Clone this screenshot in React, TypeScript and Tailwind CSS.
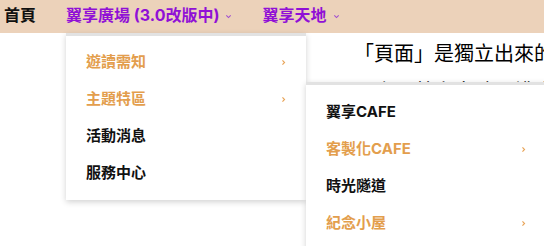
import React from 'react';

const FONT = '[font-family:Inter,"Noto_Sans_CJK_TC",sans-serif]';

function Chevron({ down = false, className = '' }: { down?: boolean; className?: string }) {
  return (
    <svg width="7" height="7" viewBox="0 0 8 8" className={className} fill="none" stroke="currentColor" strokeWidth="1.3">
      {down ? <path d="M1.5 2.8 L4 5.2 L6.5 2.8" /> : <path d="M2.8 1.5 L5.2 4 L2.8 6.5" />}
    </svg>
  );
}

type Item = { label: string; active?: boolean; sub?: boolean };

const mainItems: Item[] = [
  { label: '遊讀需知', active: true, sub: true },
  { label: '主題特區', active: true, sub: true },
  { label: '活動消息' },
  { label: '服務中心' },
];

const subItems: Item[] = [
  { label: '翼享CAFE' },
  { label: '客製化CAFE', active: true, sub: true },
  { label: '時光隧道' },
  { label: '紀念小屋', active: true, sub: true },
];

function MenuList({ items, className = '' }: { items: Item[]; className?: string }) {
  return (
    <ul className={className}>
      {items.map(it => (
        <li key={it.label} className={`flex h-[37px] items-center justify-between pl-[20px] pr-[19px] text-[15px] font-bold ${it.active ? 'text-[#e39e4d]' : 'text-[#111]'}`}>
          <span>{it.label}</span>
          {it.sub && <Chevron className="text-[#e8a458]" />}
        </li>
      ))}
    </ul>
  );
}

export default function App() {
  return (
    <div className={`relative h-[246px] w-[544px] overflow-hidden bg-white ${FONT}`}>
      <nav className="flex h-[33px] items-center bg-[#ecd2ba] pb-[3px] text-[16px] font-bold">
        <span className="ml-[4px] text-[#111]">首頁</span>
        <span className="ml-[30px] flex items-center gap-[5px] text-[#9010d6]">
          翼享廣場 (3.0改版中)
          <Chevron down className="mt-[2px] text-[#a04fd0]" />
        </span>
        <span className="ml-[31px] flex items-center gap-[6px] text-[#9010d6]">
          翼享天地
          <Chevron down className="mt-[2px] text-[#a04fd0]" />
        </span>
      </nav>

      <div className="pl-[354px] pt-[1px] text-[20px] leading-[38px] text-black [font-family:'Noto_Sans_CJK_TC',sans-serif]">
        <p className="whitespace-nowrap">「頁面」是獨立出來的內容，</p>
        <p className="whitespace-nowrap">不會跟著文章時間排序</p>
      </div>

      <div className="absolute left-[66px] top-[33px] w-[240px] border-t-[3px] border-[#e2e2e2] bg-white shadow-[0_2px_6px_rgba(0,0,0,0.18)]">
        <MenuList items={mainItems} className="pt-[8px] pb-[8px]" />
      </div>

      <div className="absolute left-[306px] top-[82px] w-[240px] border-t-[3px] border-[#e2e2e2] bg-white shadow-[0_2px_6px_rgba(0,0,0,0.18)]">
        <MenuList items={subItems} className="pt-[9px] pb-[9px]" />
      </div>
    </div>
  );
}
